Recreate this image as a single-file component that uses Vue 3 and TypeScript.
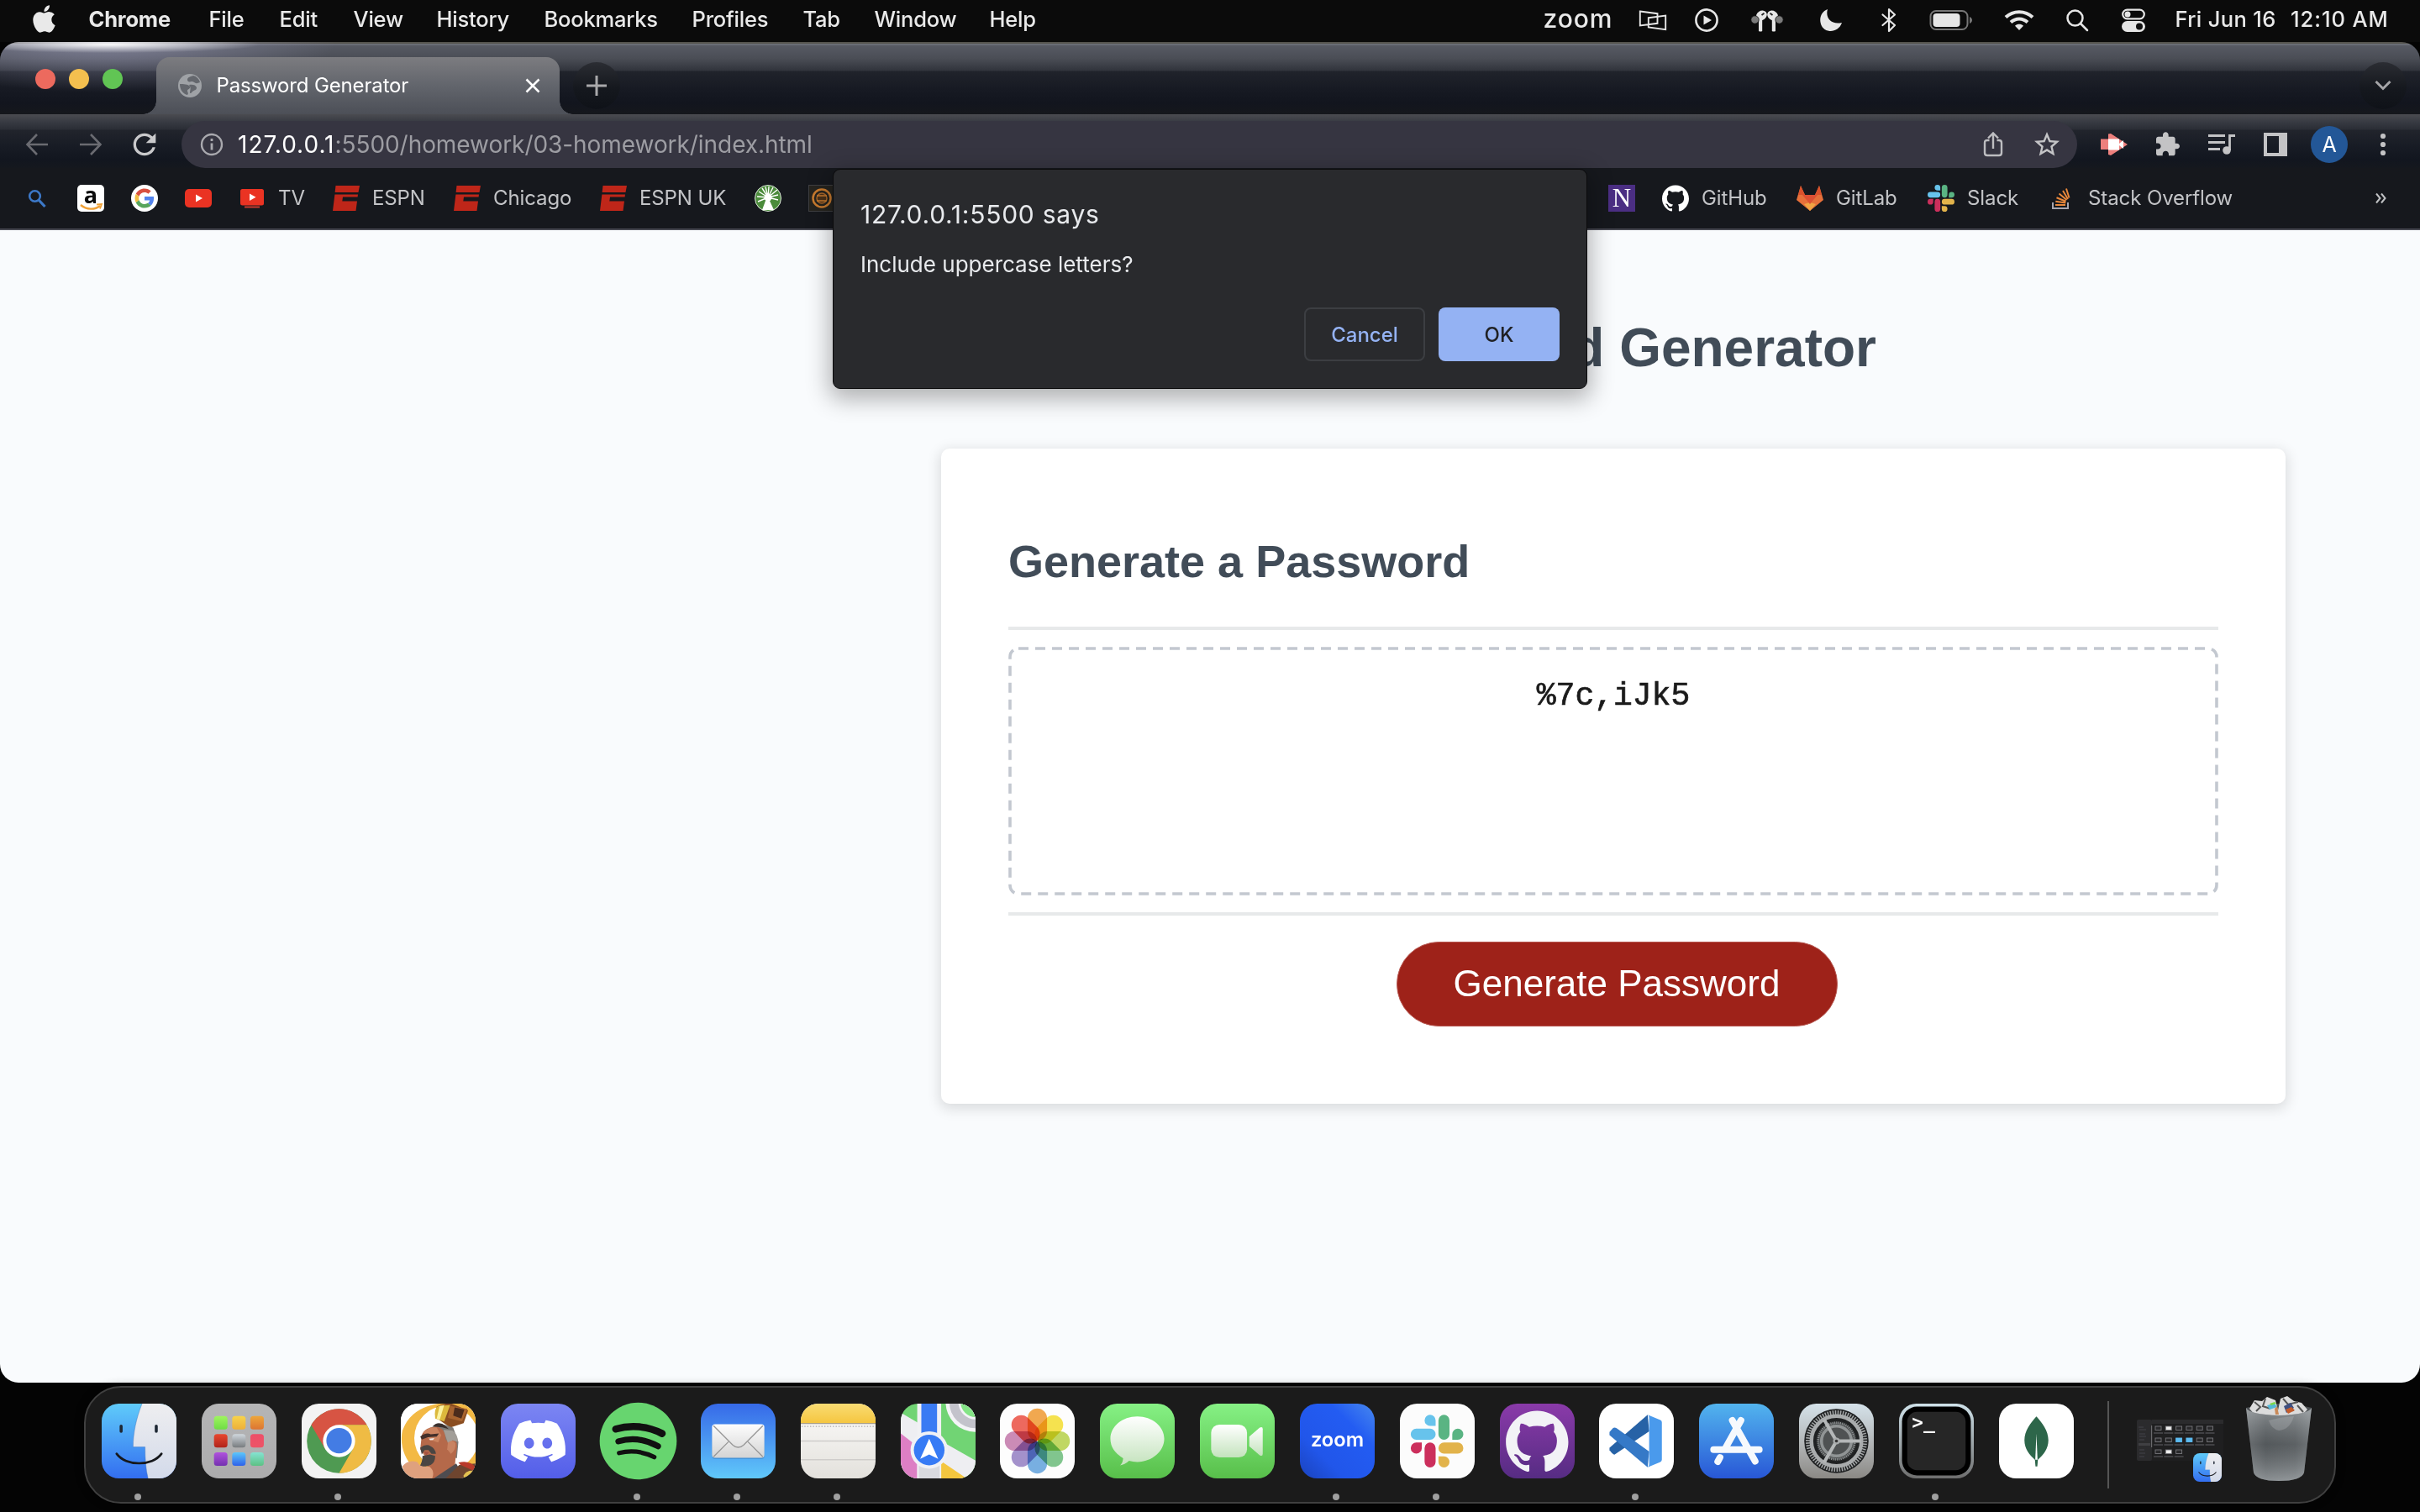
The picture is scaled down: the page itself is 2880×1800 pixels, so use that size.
<script setup lang="ts">
interface MenuItem {
  label: string
  width: number
  bold?: boolean
}

interface Bookmark {
  icon: string
  label?: string
  width?: number
}

const menuItems: MenuItem[] = [
  { label: 'Chrome', width: 101, bold: true },
  { label: 'File', width: 42 },
  { label: 'Edit', width: 46 },
  { label: 'View', width: 57 },
  { label: 'History', width: 86 },
  { label: 'Bookmarks', width: 134 },
  { label: 'Profiles', width: 90 },
  { label: 'Tab', width: 43 },
  { label: 'Window', width: 95 },
  { label: 'Help', width: 56 },
]

const leftBookmarks: Bookmark[] = [
  { icon: 'search' },
  { icon: 'amazon' },
  { icon: 'google' },
  { icon: 'youtube' },
  { icon: 'tv', label: 'TV', width: 32 },
  { icon: 'espn', label: 'ESPN', width: 64 },
  { icon: 'espn', label: 'Chicago', width: 94 },
  { icon: 'espn', label: 'ESPN UK', width: 104 },
  { icon: 'fidelity' },
  { icon: 'emblem' },
]

const rightBookmarks: Bookmark[] = [
  { icon: 'northwestern' },
  { icon: 'github', label: 'GitHub', width: 80 },
  { icon: 'gitlab', label: 'GitLab', width: 76 },
  { icon: 'slack', label: 'Slack', width: 64 },
  { icon: 'stack', label: 'Stack Overflow', width: 172 },
]

const password = '%7c,iJk5'

const githubPath =
  'M12 .297c-6.63 0-12 5.373-12 12 0 5.303 3.438 9.8 8.205 11.385.6.113.82-.258.82-.577 0-.285-.01-1.04-.015-2.04-3.338.724-4.042-1.61-4.042-1.61C4.422 18.07 3.633 17.7 3.633 17.7c-1.087-.744.084-.729.084-.729 1.205.084 1.838 1.236 1.838 1.236 1.07 1.835 2.809 1.305 3.495.998.108-.776.417-1.305.76-1.605-2.665-.3-5.466-1.332-5.466-5.93 0-1.31.465-2.38 1.235-3.22-.135-.303-.54-1.523.105-3.176 0 0 1.005-.322 3.3 1.23.96-.267 1.98-.399 3-.405 1.02.006 2.04.138 3 .405 2.28-1.552 3.285-1.23 3.285-1.23.645 1.653.24 2.873.12 3.176.765.84 1.23 1.91 1.23 3.22 0 4.61-2.805 5.625-5.475 5.92.42.36.81 1.096.81 2.22 0 1.606-.015 2.896-.015 3.286 0 .315.21.69.825.57C20.565 22.092 24 17.592 24 12.297c0-6.627-5.373-12-12-12'

const slackPaths = [
  { fill: '#cc2f5c', d: 'M5.042 15.165a2.528 2.528 0 0 1-2.52 2.523A2.528 2.528 0 0 1 0 15.165a2.527 2.527 0 0 1 2.522-2.52h2.52v2.52zM6.313 15.165a2.527 2.527 0 0 1 2.521-2.52 2.527 2.527 0 0 1 2.521 2.52v6.313A2.528 2.528 0 0 1 8.834 24a2.528 2.528 0 0 1-2.521-2.522v-6.313z' },
  { fill: '#67c3ec', d: 'M8.834 5.042a2.528 2.528 0 0 1-2.521-2.52A2.528 2.528 0 0 1 8.834 0a2.528 2.528 0 0 1 2.521 2.522v2.52H8.834zM8.834 6.313a2.528 2.528 0 0 1 2.521 2.521 2.528 2.528 0 0 1-2.521 2.521H2.522A2.528 2.528 0 0 1 0 8.834a2.528 2.528 0 0 1 2.522-2.521h6.312z' },
  { fill: '#5ab483', d: 'M18.956 8.834a2.528 2.528 0 0 1 2.522-2.521A2.528 2.528 0 0 1 24 8.834a2.528 2.528 0 0 1-2.522 2.521h-2.522V8.834zM17.688 8.834a2.528 2.528 0 0 1-2.523 2.521 2.527 2.527 0 0 1-2.52-2.521V2.522A2.527 2.527 0 0 1 15.165 0a2.528 2.528 0 0 1 2.523 2.522v6.312z' },
  { fill: '#e2b34b', d: 'M15.165 18.956a2.528 2.528 0 0 1 2.523 2.522A2.528 2.528 0 0 1 15.165 24a2.527 2.527 0 0 1-2.52-2.522v-2.522h2.52zM15.165 17.688a2.527 2.527 0 0 1-2.52-2.523 2.526 2.526 0 0 1 2.52-2.52h6.313A2.527 2.527 0 0 1 24 15.165a2.528 2.528 0 0 1-2.522 2.523h-6.313z' },
]

const launchpadTiles = [
  ['#9ff55f', '#6fdd45'],
  ['#f7d34c', '#eeb039'],
  ['#eda73b', '#dd7532'],
  ['#e8472f', '#b0241a'],
  ['#cfd6dc', '#777b7e'],
  ['#ee4e68', '#ec5467'],
  ['#b052dd', '#7431b0'],
  ['#5cc7fa', '#2f62ea'],
  ['#86e3d2', '#5cc184'],
]

const petals = ['#f2a03d', '#f6e13c', '#bcd553', '#74c183', '#6aa9e0', '#9a86c8', '#c87fb0', '#ee5a4d']
</script>

<template>
  <div class="desktop">
    <svg class="defs" width="0" height="0">
      <defs>
        <linearGradient id="finderBlue" x1="0" y1="0" x2="0" y2="1"><stop offset="0" stop-color="#5fcbfa" /><stop offset="1" stop-color="#336ef0" /></linearGradient>
        <linearGradient id="finderGray" x1="0" y1="0" x2="0" y2="1"><stop offset="0" stop-color="#eeeef0" /><stop offset="1" stop-color="#d3daea" /></linearGradient>
        <linearGradient id="launchBg" x1="0" y1="0" x2="0" y2="1"><stop offset="0" stop-color="#b5b5b6" /><stop offset="1" stop-color="#acacad" /></linearGradient>
        <linearGradient id="discordBg" x1="0" y1="0" x2="0" y2="1"><stop offset="0" stop-color="#7c86f3" /><stop offset="1" stop-color="#535ee9" /></linearGradient>
        <linearGradient id="mailBg" x1="0" y1="0" x2="0" y2="1"><stop offset="0" stop-color="#3669e8" /><stop offset="1" stop-color="#60c8fa" /></linearGradient>
        <linearGradient id="silver" x1="0" y1="0" x2="0" y2="1"><stop offset="0" stop-color="#fdfdfd" /><stop offset="1" stop-color="#d4d4d4" /></linearGradient>
        <linearGradient id="notesTop" x1="0" y1="0" x2="0" y2="1"><stop offset="0" stop-color="#f9dc73" /><stop offset="1" stop-color="#f5c640" /></linearGradient>
        <linearGradient id="notesPaper" x1="0" y1="0" x2="0" y2="1"><stop offset="0" stop-color="#fcfbfa" /><stop offset="1" stop-color="#e3e1dc" /></linearGradient>
        <linearGradient id="greenBg" x1="0" y1="0" x2="0" y2="1"><stop offset="0" stop-color="#86f185" /><stop offset="1" stop-color="#58bf4a" /></linearGradient>
        <linearGradient id="bubble" x1="0" y1="0" x2="0" y2="1"><stop offset="0" stop-color="#ffffff" /><stop offset="1" stop-color="#c4e3bd" /></linearGradient>
        <linearGradient id="zoomBg" x1="1" y1="0" x2="0" y2="1"><stop offset="0" stop-color="#4788ee" /><stop offset=".3" stop-color="#235cf2" /><stop offset=".7" stop-color="#2156ea" /><stop offset="1" stop-color="#1a43bd" /></linearGradient>
        <linearGradient id="githubBg" x1="0" y1="0" x2="0" y2="1"><stop offset="0" stop-color="#8a3aa9" /><stop offset="1" stop-color="#562c83" /></linearGradient>
        <linearGradient id="storeBg" x1="0" y1="0" x2="0" y2="1"><stop offset="0" stop-color="#52b4ee" /><stop offset="1" stop-color="#2857d6" /></linearGradient>
        <linearGradient id="steel" x1="0" y1="0" x2="0" y2="1"><stop offset="0" stop-color="#d5e2ea" /><stop offset=".55" stop-color="#b1b4b5" /><stop offset="1" stop-color="#8b8985" /></linearGradient>
        <linearGradient id="termRim" x1="0" y1="0" x2="0" y2="1"><stop offset="0" stop-color="#cfe2ea" /><stop offset="1" stop-color="#6e6e6e" /></linearGradient>
        <linearGradient id="can" x1="0" y1="0" x2="1" y2="0"><stop offset="0" stop-color="#85898c" /><stop offset=".3" stop-color="#606568" /><stop offset=".75" stop-color="#6d7275" /><stop offset="1" stop-color="#8e9396" /></linearGradient>
        <linearGradient id="canShade" x1="0" y1="0" x2="0" y2="1"><stop offset="0" stop-color="#b7bcbf" stop-opacity=".5" /><stop offset=".5" stop-color="#3d4144" stop-opacity=".35" /><stop offset="1" stop-color="#b1b6b9" stop-opacity=".55" /></linearGradient>
        <clipPath id="squircle"><rect width="100" height="100" rx="23" /></clipPath>
        <symbol id="finderFace" viewBox="0 0 100 100">
          <g clip-path="url(#squircle)">
            <rect width="100" height="100" fill="url(#finderBlue)" />
            <path d="M54 0C46 20 42 40 42 58h16c0 16 1 30 4 42h38V0z" fill="url(#finderGray)" />
            <path d="M54 0C46 20 42 40 42 58h16c0 16 1 30 4 42" fill="none" stroke="#3c6fb5" stroke-opacity=".45" stroke-width="1" />
            <rect x="24" y="28" width="4" height="11" rx="2" fill="#1d2733" />
            <rect x="71" y="28" width="4" height="11" rx="2" fill="#1d2733" />
            <path d="M20 67c12 17 48 17 60 0" fill="none" stroke="#16181c" stroke-width="3" stroke-linecap="round" />
          </g>
        </symbol>
      </defs>
    </svg>

    <header class="menubar">
      <svg class="apple" viewBox="2 0 20 24"><path fill="#e9e9e9" d="M12.152 6.896c-.948 0-2.415-1.078-3.96-1.04-2.04.027-3.91 1.183-4.961 3.014-2.117 3.675-.546 9.103 1.519 12.09 1.013 1.454 2.208 3.09 3.792 3.039 1.52-.065 2.09-.987 3.935-.987 1.831 0 2.35.987 3.96.948 1.637-.026 2.676-1.48 3.676-2.948 1.156-1.688 1.636-3.325 1.662-3.415-.039-.013-3.182-1.221-3.22-4.857-.026-3.04 2.48-4.494 2.597-4.559-1.429-2.09-3.623-2.324-4.39-2.376-2-.156-3.675 1.09-4.61 1.09zM15.53 3.83c.843-1.012 1.4-2.427 1.245-3.83-1.207.052-2.662.805-3.532 1.818-.78.896-1.454 2.338-1.273 3.714 1.338.104 2.715-.688 3.559-1.701" /></svg>
      <nav class="menus">
        <span v-for="item in menuItems" :key="item.label" class="menu" :class="{ bold: item.bold }" :style="{ width: item.width + 'px' }">{{ item.label }}</span>
      </nav>
      <div class="status">
        <span class="zoom-word">zoom</span>
        <svg class="s-share" width="34" height="28" viewBox="0 0 34 28" fill="none" stroke="#e6e6e6" stroke-width="1.900"><path d="M1.800 3.500l20.700 2.700v11.600L1.800 20.500zM11.800 11.200l20.400-2.700v16.700l-20.400-2.700z" /></svg>
        <svg class="s-play" width="30" height="30" viewBox="0 0 30 30"><circle cx="15" cy="15" r="12.600" fill="none" stroke="#e6e6e6" stroke-width="2.600" /><path d="M11.500 9.500l9.500 5.500-9.500 5.500z" fill="#e6e6e6" /></svg>
        <svg class="s-pods" width="40" height="28" viewBox="0 0 40 28">
          <g fill="#e6e6e6"><ellipse cx="13.300" cy="8.500" rx="6.800" ry="5.600" transform="rotate(-35 13.300 8.500)" /><ellipse cx="26.700" cy="8.500" rx="6.800" ry="5.600" transform="rotate(35 26.700 8.500)" /><rect x="10" y="12" width="4.200" height="15.500" rx="1.200" /><rect x="25.800" y="12" width="4.200" height="15.500" rx="1.200" /></g>
          <circle cx="5.500" cy="13.500" r="4.700" fill="#7b7b7b" stroke="#0b0b0b" stroke-width=".8" /><circle cx="34.500" cy="13.500" r="4.700" fill="#7b7b7b" stroke="#0b0b0b" stroke-width=".8" />
          <path d="M13.500 8l3-2.200M26.500 8l-3-2.200" stroke="#222" stroke-width="1.800" />
        </svg>
        <svg class="s-moon" width="30" height="30" viewBox="0 0 30 30"><path d="M11 2C8 12 15 21 28 18 24 30 9 31 4 22-0 14 3 5 11 2z" fill="#e6e6e6" /></svg>
        <svg class="s-bt" width="20" height="30" viewBox="0 0 20 30" fill="none" stroke="#e6e6e6" stroke-width="2.200" stroke-linejoin="round" stroke-linecap="round"><path d="M2.500 8.500L17 21 10 28V2l7 6.500L2.500 21" /></svg>
        <svg class="s-batt" width="52" height="26" viewBox="0 0 52 26"><rect x="1.500" y="2" width="44" height="22" rx="6.500" fill="none" stroke="#777" stroke-width="2" /><rect x="4.500" y="5" width="32" height="16" rx="4" fill="#e6e6e6" /><path d="M48 9c4 1.500 4 6.500 0 8z" fill="#777" /></svg>
        <svg class="s-wifi" width="36" height="28" viewBox="0 0 36 28" fill="none" stroke="#e6e6e6" stroke-width="4"><path d="M2 10.500c9-8.500 23-8.500 32 0M8 16.500c6-5.500 14-5.500 20 0" /><path d="M18 26l-5-5.200c3-2.600 7-2.600 10 0z" fill="#e6e6e6" stroke="none" /></svg>
        <svg class="s-search" width="28" height="28" viewBox="0 0 28 28" fill="none" stroke="#e6e6e6" stroke-width="2.500" stroke-linecap="round"><circle cx="11.500" cy="11.500" r="9" /><path d="M18 18l8 8" /></svg>
        <svg class="s-cc" width="30" height="28" viewBox="0 0 30 28"><rect x="2.200" y="1.700" width="25.600" height="10.600" rx="5.300" fill="none" stroke="#e6e6e6" stroke-width="2.200" /><circle cx="8" cy="7" r="3.500" fill="#e6e6e6" /><rect x="1" y="15" width="28" height="13" rx="6.500" fill="#e6e6e6" /><circle cx="22" cy="21.500" r="4" fill="#111" /></svg>
        <span class="date">Fri Jun 16</span>
        <span class="time">12:10 AM</span>
      </div>
    </header>

    <section class="window">
      <div class="tabstrip">
        <div class="lights"><i class="red"></i><i class="yellow"></i><i class="green"></i></div>
        <div class="tab">
          <svg class="favicon" width="28" height="28" viewBox="0 0 28 28"><circle cx="14" cy="14" r="14" fill="#9fa2a6" /><path d="M18 2c-3 1-7 2-7 5 0 2 2 3 5 2 3 0 4 3 7 2l3-1C25 6 22 3 18 2zM2 12c4 0 10 0 12 3 1 3-3 3-3 5s2 3 0 5C6 24 2 19 2 12zM13 13c4-1 8 0 9 3 0 4-3 3-5 5-1 1-1 2-3 2 0-4 2-6-1-10z" fill="#64676d" /></svg>
          <span class="tab-title">Password Generator</span>
          <svg class="close" width="18" height="18" viewBox="0 0 18 18" stroke="#fff" stroke-width="2.500"><path d="M1.500 1.500l15 15M16.500 1.500l-15 15" /></svg>
        </div>
        <div class="round-btn"><svg width="24" height="24" viewBox="0 0 24 24" stroke="#a9a9ab" stroke-width="3"><path d="M12 0v24M0 12h24" /></svg></div>
        <div class="round-btn last"><svg width="20" height="14" viewBox="0 0 20 14" fill="none" stroke="#a5a5a8" stroke-width="3"><path d="M1.500 2l8.500 8.500L18.500 2" /></svg></div>
      </div>

      <div class="toolbar">
        <svg class="nav-icon" width="28" height="28" viewBox="0 0 28 28" fill="none" stroke="#6a6b71" stroke-width="2.600"><path d="M27 14H3M14 2L2.500 14 14 26" /></svg>
        <svg class="nav-icon" width="28" height="28" viewBox="0 0 28 28" fill="none" stroke="#6a6b71" stroke-width="2.600"><path d="M1 14h24M14 2l11.500 12L14 26" /></svg>
        <svg class="nav-icon reload" width="40" height="40" viewBox="0 0 24 24"><path fill="#c9c9cb" d="M17.650 6.350C16.200 4.900 14.210 4 12 4c-4.420 0-7.990 3.580-7.990 8s3.570 8 7.990 8c3.730 0 6.840-2.550 7.730-6h-2.080c-.82 2.330-3.040 4-5.650 4-3.310 0-6-2.690-6-6s2.690-6 6-6c1.660 0 3.140.69 4.220 1.780L13 11h7V4l-2.350 2.350z" /></svg>
        <div class="omnibox">
          <svg class="info" width="28" height="28" viewBox="0 0 28 28"><circle cx="14" cy="14" r="12" fill="none" stroke="#a9a9ae" stroke-width="2.400" /><path d="M14 12.500v8M14 7v3" stroke="#a9a9ae" stroke-width="2.800" /></svg>
          <span class="url"><b>127.0.0.1</b>:5500/homework/03-homework/index.html</span>
          <svg class="share" width="24" height="32" viewBox="0 0 24 32" fill="none" stroke="#bdbdc0" stroke-width="2.400"><path d="M7.500 11H5q-3 0-3 3v12q0 3 3 3h14q3 0 3-3V14q0-3-3-3h-2.500M12 21V3.500M6 8.500l6-6 6 6" /></svg>
          <svg class="star" width="36" height="36" viewBox="0 0 24 24"><path fill="#c4c4c6" d="M22 9.240l-7.190-.62L12 2 9.190 8.630 2 9.240l5.460 4.730L5.820 21 12 17.270 18.180 21l-1.630-7.030L22 9.240zM12 15.400l-3.760 2.270 1-4.280-3.320-2.880 4.380-.38L12 6.100l1.710 4.040 4.380.38-3.320 2.880 1 4.280L12 15.400z" /></svg>
        </div>
        <div class="actions">
          <svg width="32" height="32" viewBox="0 0 32 32"><path d="M0 9.500h9V3.500L12 3l20 13-20 13-3-1v-6H0z" fill="#ee807d" /><rect x="9" y="9.500" width="13" height="13" fill="#fff" /><path d="M22 15l5-4v10l-5-4z" fill="#fff" /></svg>
          <svg width="32" height="32" viewBox="0.500 0 24 24"><path fill="#c3c3c5" d="M20.500 11H19V7c0-1.100-.9-2-2-2h-4V3.500C13 2.120 11.880 1 10.500 1S8 2.120 8 3.500V5H4c-1.100 0-1.990.9-1.990 2v3.800H3.500c1.490 0 2.700 1.210 2.700 2.700s-1.210 2.700-2.700 2.700H2V20c0 1.100.9 2 2 2h3.800v-1.500c0-1.490 1.210-2.700 2.700-2.700 1.490 0 2.700 1.210 2.700 2.700V22H17c1.100 0 2-.9 2-2v-4h1.500c1.380 0 2.500-1.120 2.500-2.500S21.880 11 20.500 11z" /></svg>
          <svg width="32" height="32" viewBox="0 0 32 32" fill="none" stroke="#c3c3c5" stroke-width="2.800"><path d="M0 5.500h20M0 13.500h20M0 21.500h14M25.500 23V5.500H32" /><circle cx="22" cy="23" r="4.800" fill="#c3c3c5" stroke="none" /></svg>
          <svg width="32" height="32" viewBox="0 0 32 32"><path fill="#c3c3c5" fill-rule="evenodd" d="M2 2h28v28H2zM6 6v20h14V6z" /></svg>
          <span class="avatar">A</span>
          <svg width="32" height="32" viewBox="0 0 32 32" fill="#c3c3c5"><circle cx="16" cy="6" r="3.100" /><circle cx="16" cy="16" r="3.100" /><circle cx="16" cy="26" r="3.100" /></svg>
        </div>
      </div>

      <div class="bookmarks">
        <template v-for="(group, g) in [leftBookmarks, rightBookmarks]" :key="g">
          <div class="bookmark-group">
            <div v-for="(mark, i) in group" :key="i" class="bookmark">
              <svg width="32" height="32" viewBox="0 0 32 32">
                <g v-if="mark.icon === 'search'" fill="none" stroke="#3c78c8" stroke-width="2.600"><circle cx="13.500" cy="13.500" r="6.300" /><path d="M18 18l7.500 8" stroke-width="3.200" /></g>
                <g v-else-if="mark.icon === 'amazon'">
                  <rect width="32" height="32" rx="5" fill="#fff" />
                  <text x="16" y="21.500" text-anchor="middle" font-family="Open Sans, sans-serif" font-weight="700" font-size="27" fill="#0d0d0d">a</text>
                  <path d="M4 24c7 6 17 6 23 1" fill="none" stroke="#f0a136" stroke-width="2.400" /><path d="M23 23.500l6-.5-2 5.500" fill="none" stroke="#f0a136" stroke-width="1.800" />
                </g>
                <g v-else-if="mark.icon === 'google'">
                  <circle cx="16" cy="16" r="16" fill="#fff" />
                  <g transform="translate(4.500 4.500) scale(.48)">
                    <path fill="#d95040" d="M24 9.500c3.540 0 6.710 1.220 9.210 3.600l6.850-6.850C35.900 2.380 30.470 0 24 0 14.620 0 6.510 5.380 2.560 13.220l7.980 6.190C12.430 13.720 17.740 9.500 24 9.500z" />
                    <path fill="#5383ec" d="M46.980 24.550c0-1.570-.15-3.090-.38-4.550H24v9.020h12.940c-.58 2.960-2.260 5.480-4.780 7.180l7.730 6c4.510-4.180 7.090-10.360 7.090-17.650z" />
                    <path fill="#f2bd42" d="M10.530 28.590c-.48-1.450-.76-2.990-.76-4.590s.27-3.140.76-4.590l-7.980-6.190C.92 16.460 0 20.120 0 24c0 3.880.92 7.540 2.560 10.780l7.970-6.190z" />
                    <path fill="#58a55c" d="M24 48c6.480 0 11.930-2.130 15.890-5.810l-7.730-6c-2.150 1.450-4.920 2.300-8.160 2.300-6.260 0-11.570-4.220-13.470-9.910l-7.980 6.190C6.510 42.620 14.620 48 24 48z" />
                  </g>
                </g>
                <g v-else-if="mark.icon === 'youtube'"><rect y="5" width="32" height="22" rx="5" fill="#ea3323" /><path d="M13 11.500l8 4.500-8 4.500z" fill="#fff" /></g>
                <g v-else-if="mark.icon === 'tv'"><rect x="2" y="5" width="28" height="19.500" rx="2.500" fill="#ea3323" /><path d="M13 10.500l7.500 4.200-7.500 4.200z" fill="#fff" /><rect x="7" y="25.500" width="18" height="2" fill="#c93a2f" /></g>
                <g v-else-if="mark.icon === 'espn'" fill="#bf2619"><path d="M3.500 1H32l-1.500 8H2.600zM2.400 11.500H30l-.4 3H12l-.7 5H29L27.500 31H0z" /></g>
                <g v-else-if="mark.icon === 'fidelity'">
                  <circle cx="16" cy="16" r="15.500" fill="#4b8b3b" stroke="#dfe9dc" stroke-width="1" />
                  <path d="M16 15L9 4M16 15L13 2.500M16 15l1-13M16 15l6-12M16 15l11-9M16 15l12-3M16 15L5 8M16 15L3 14M16 15l12 3M16 15L4 20" stroke="#fff" stroke-width="1.400" />
                  <circle cx="16" cy="15" r="4.500" fill="#fff" /><path d="M13 19h5l5 11H9z" fill="#fff" />
                </g>
                <g v-else-if="mark.icon === 'emblem'"><rect x=".5" y=".5" width="31" height="31" fill="#26241f" stroke="#3f3f42" /><circle cx="16" cy="16" r="10.500" fill="none" stroke="#c97b2f" stroke-width="2.500" /><circle cx="16" cy="16" r="6" fill="#4b3118" stroke="#a8662a" stroke-width="1.500" /><path d="M10 13h12M10 19h12" stroke="#c97b2f" stroke-width="1.500" /></g>
                <g v-else-if="mark.icon === 'northwestern'"><rect width="32" height="32" fill="#4b2e83" /><text x="16" y="26" text-anchor="middle" font-family="Liberation Serif, serif" font-size="31" fill="#fff">N</text></g>
                <path v-else-if="mark.icon === 'github'" transform="scale(1.333)" fill="#fff" :d="githubPath" />
                <g v-else-if="mark.icon === 'gitlab'"><path d="M0 18L5 1l5 11h12l5-11 5 17-16 13z" fill="#e6703a" /><path d="M5 1l5 11H2.200zM27 1l-5 11h7.800z" fill="#d9512c" /><path d="M9 23l7-2 7 2-7 8z" fill="#f0a443" /><path d="M7 12l9 11 9-11z" fill="#dc5033" /></g>
                <g v-else-if="mark.icon === 'slack'" transform="scale(1.333)"><path v-for="p in slackPaths" :key="p.fill" :fill="p.fill" :d="p.d" /></g>
                <g v-else fill="none" stroke="#e8873b" stroke-width="2.200"><path d="M8 24h12" /><path d="M8.300 19.800l12 1.700M9.500 15.200l11 4.500M12.500 10.500l9 7.500M17 7l6 10M21 4.500l3.500 11" stroke-width="2" /><path d="M5 21v7h18v-7" stroke="#a7a5ae" stroke-width="2" /></g>
              </svg>
              <span v-if="mark.label" class="mark-label" :style="{ width: mark.width + 'px' }">{{ mark.label }}</span>
            </div>
          </div>
        </template>
        <svg class="more" width="13" height="14" viewBox="0 0 13 14" fill="none" stroke="#bfc0c3" stroke-width="2"><path d="M1 1.500L5.500 7 1 12.500M7 1.500L11.500 7 7 12.500" /></svg>
      </div>

      <main class="page">
        <h1>Password Generator</h1>
        <div class="card">
          <h2>Generate a Password</h2>
          <div class="rule"></div>
          <div class="output">
            <svg class="dashes" width="1440" height="296" viewBox="0 0 1440 296"><rect x="2" y="2" width="1436" height="292" rx="10" fill="none" stroke="#c3c8d0" stroke-width="3.600" stroke-dasharray="12 8" /></svg>
            <span>{{ password }}</span>
          </div>
          <div class="rule"></div>
          <button class="generate">Generate Password</button>
        </div>
      </main>

      <div class="dialog">
        <div class="dialog-title">127.0.0.1:5500 says</div>
        <div class="dialog-text">Include uppercase letters?</div>
        <div class="dialog-actions">
          <button class="cancel">Cancel</button>
          <button class="ok">OK</button>
        </div>
      </div>
    </section>

    <footer class="dock">
      <div class="apps">
        <div class="app running"><svg viewBox="0 0 100 100"><use href="#finderFace" /></svg></div>
        <div class="app">
          <svg viewBox="0 0 100 100">
            <rect width="100" height="100" rx="23" fill="url(#launchBg)" />
            <g v-for="(tile, i) in launchpadTiles" :key="i">
              <linearGradient :id="'tile' + i" x1="0" y1="0" x2="0" y2="1"><stop offset="0" :stop-color="tile[0]" /><stop offset="1" :stop-color="tile[1]" /></linearGradient>
              <rect :x="16.500 + (i % 3) * 24.300" :y="16.500 + Math.floor(i / 3) * 24.300" width="18" height="18" rx="4" :fill="`url(#tile${i})`" />
            </g>
          </svg>
        </div>
        <div class="app running">
          <svg viewBox="0 0 100 100">
            <rect width="100" height="100" rx="23" fill="#f3f3f3" />
            <circle cx="50" cy="50" r="43" fill="#4f9a52" />
            <path d="M12.800 28.500A43 43 0 0 1 87.200 28.500H50L31.400 60.700z" fill="#d75443" />
            <path d="M87.200 28.500A43 43 0 0 1 50 93L68.600 60.700 50 28.500z" fill="#efbb44" />
            <circle cx="50" cy="50" r="21.500" fill="#fff" /><circle cx="50" cy="49.500" r="17" fill="#437ce4" />
          </svg>
        </div>
        <div class="app">
          <svg viewBox="0 0 100 100">
            <g clip-path="url(#squircle)">
              <rect width="100" height="100" fill="#fff" />
              <circle cx="56" cy="47" r="55" fill="#f3b944" /><circle cx="61" cy="46" r="43" fill="#fff" />
              <path d="M0 0h50Q14 6 3 34L0 40z" fill="#fff" />
              <path d="M46 18l2-14q8-5 20-4l22 9-6 17-18 6z" fill="#8a4d20" />
              <path d="M46 20q-2-14 4-17l16-1-8 22z" fill="#dcb93c" /><path d="M52 3l6-1-6 20-4-2z" fill="#fbf3a0" />
              <path d="M66 3l23 4-7 17-19-5z" fill="#a86430" /><path d="M72 5l13 3-4 12-11-4z" fill="#4c2c1c" />
              <path d="M44 32q3-5 14-4l12 4 7 19-2 22-14-4-6-20z" fill="#7d7a76" />
              <path d="M28 42q6-12 20-11 12 2 12 18l10 0q6 0 5 10l-2 16-2 25H40L32 70l-6-9z" fill="#b5694a" />
              <path d="M30 38q8-7 18-6l6 10-4 10-12-4z" fill="#cc8460" />
              <path d="M42 31q8-9 18-1l4 4q-10-4-22-3z" fill="#3b302d" />
              <path d="M26 44q8-6 14-3l11-1-3 4-12 1-8 3z" fill="#43302b" /><path d="M38 47l7-1-2 2.500-4 .5z" fill="#eee" />
              <path d="M57 35l12 1q8 6 7 15l-7-2-5 7z" fill="#a29e98" />
              <path d="M63 52q7-5 10 1 1 9-6 14l-5-6z" fill="#c98362" />
              <path d="M26 59q8-6 14-2 6 3 7 10l-6 0-4-5-5 0-4 6z" fill="#4a4542" />
              <path d="M29 70l10-2 7 2q0 9-6 12-7 3-15 2 4-6 4-14z" fill="#4a4542" />
              <path d="M31 64l7 1-4 4z" fill="#a45141" />
              <path d="M2 84q8-10 20-6 4 8 16 6 8 6 4 16H8z" fill="#dfa17e" />
              <path d="M44 100l30-20 12 20z" fill="#4e4c50" /><path d="M60 100l18-18 22-2v20z" fill="#6f452f" />
              <path d="M77 79q14-4 23 6v6L80 82z" fill="#b93a2a" /><path d="M84 96q4-8 16-6v10H84z" fill="#e4c250" />
            </g>
          </svg>
        </div>
        <div class="app">
          <svg viewBox="0 0 100 100">
            <rect width="100" height="100" rx="23" fill="url(#discordBg)" />
            <path transform="translate(13.500 13.500) scale(3.040)" fill="#fff" d="M20.317 4.370a19.791 19.791 0 00-4.885-1.515.074.074 0 00-.079.037c-.211.375-.445.865-.608 1.250-1.845-.276-3.680-.276-5.487 0-.164-.393-.406-.874-.618-1.250a.077.077 0 00-.079-.037 19.736 19.736 0 00-4.885 1.515.07.07 0 00-.032.028C.533 9.046-.319 13.580.099 18.058a.082.082 0 00.031.056c2.053 1.508 4.041 2.423 5.993 3.029a.078.078 0 00.084-.028c.462-.63.873-1.295 1.226-1.994a.076.076 0 00-.042-.106c-.653-.248-1.274-.55-1.872-.892a.077.077 0 01-.008-.128c.126-.094.252-.192.372-.291a.074.074 0 01.078-.011c3.928 1.793 8.180 1.793 12.061 0a.074.074 0 01.079.01c.12.099.246.198.373.292a.077.077 0 01-.007.128 12.299 12.299 0 01-1.873.891.077.077 0 00-.041.107c.36.698.772 1.363 1.225 1.993a.076.076 0 00.084.029c1.961-.607 3.950-1.522 6.002-3.029a.077.077 0 00.031-.055c.5-5.177-.838-9.674-3.549-13.660a.061.061 0 00-.031-.029zM8.020 15.331c-1.183 0-2.157-1.086-2.157-2.419 0-1.333.956-2.419 2.157-2.419 1.211 0 2.176 1.095 2.157 2.419 0 1.333-.956 2.419-2.157 2.419zm7.975 0c-1.183 0-2.157-1.086-2.157-2.419 0-1.333.955-2.419 2.157-2.419 1.211 0 2.176 1.095 2.157 2.419 0 1.333-.946 2.419-2.157 2.419z" />
          </svg>
        </div>
        <div class="app running">
          <svg viewBox="0 0 100 100" class="spotify">
            <circle cx="50" cy="50" r="51.500" fill="#67d56f" />
            <g fill="none" stroke="#111" stroke-linecap="round"><path d="M20 34c20-6 43-4 62 6" stroke-width="9.600" /><path d="M23.500 50.500c17-5 36-3 53 6.500" stroke-width="8" /><path d="M24.500 66c16-4 32-2 47 5.500" stroke-width="6" /></g>
          </svg>
        </div>
        <div class="app running">
          <svg viewBox="0 0 100 100">
            <rect width="100" height="100" rx="23" fill="url(#mailBg)" />
            <rect x="15" y="30" width="70" height="44" rx="4" fill="#1b4f94" opacity=".35" />
            <rect x="15" y="27.500" width="70" height="45" rx="4" fill="url(#silver)" />
            <path d="M17 71l20-20M83 71L63 51M17 29.500l26 26q7 6 14 0l26-26" fill="none" stroke="#979797" stroke-width="1.500" />
          </svg>
        </div>
        <div class="app running">
          <svg viewBox="0 0 100 100">
            <g clip-path="url(#squircle)">
              <rect width="100" height="100" fill="url(#notesPaper)" /><rect width="100" height="26" fill="url(#notesTop)" /><path d="M0 26.500h100" stroke="#aaa08a" stroke-width="1.500" />
              <path d="M1 30.500h98" stroke="#aaa" stroke-width="1.600" stroke-dasharray="1.600 2.200" /><path d="M0 50h100M0 75h100" stroke="#cfcdcb" stroke-width="1.600" />
            </g>
          </svg>
        </div>
        <div class="app">
          <svg viewBox="0 0 100 100">
            <g clip-path="url(#squircle)">
              <rect width="100" height="100" fill="#71d474" />
              <circle cx="100" cy="-2" r="40" fill="#f4f4f7" /><circle cx="100" cy="-2" r="35" fill="#c3c3cb" /><circle cx="100" cy="-2" r="23" fill="#f4f4f7" /><circle cx="100" cy="-2" r="20" fill="#84e486" />
              <path d="M0 12L22 25 54 50l46 26v24H0z" fill="#eeeef2" />
              <path d="M0 40l22 17v43H0z" fill="#dd7fc4" /><path d="M54 77l34 23H54z" fill="#f4c63f" />
              <rect x="22" width="32" height="100" fill="#f1f1f4" /><rect x="27.500" width="21" height="52" fill="#3a7bf3" /><path d="M24 70h28v30H24z" fill="#d9dadf" />
              <circle cx="38" cy="62" r="25" fill="#f0f1f5" /><circle cx="38" cy="62" r="20.500" fill="#377bf5" /><path d="M38 47l12 27-12-6-12 6z" fill="#fff" />
            </g>
          </svg>
        </div>
        <div class="app">
          <svg viewBox="0 0 100 100">
            <rect width="100" height="100" rx="23" fill="#fdfdfd" />
            <g class="petals"><rect v-for="(color, i) in petals" :key="color" x="37" y="6.500" width="26" height="43" rx="13" :fill="color" opacity=".9" :transform="`rotate(${i * 45} 50 50)`" /></g>
          </svg>
        </div>
        <div class="app">
          <svg viewBox="0 0 100 100">
            <rect width="100" height="100" rx="23" fill="url(#greenBg)" />
            <path d="M50 17c20 0 36 13.500 36 30S70 78 50 78q-6 0-11-1.500Q33 82 27 82.500q4-4 4-9.500Q14 63 14 47c0-16.500 16-30 36-30z" fill="url(#bubble)" />
          </svg>
        </div>
        <div class="app">
          <svg viewBox="0 0 100 100">
            <rect width="100" height="100" rx="23" fill="url(#greenBg)" />
            <rect x="15" y="28" width="48" height="44" rx="11" fill="url(#bubble)" /><path d="M66 44l14-12q4-2 4 2v33q0 4-4 2L66 57z" fill="url(#bubble)" />
          </svg>
        </div>
        <div class="app running">
          <svg viewBox="0 0 100 100">
            <rect width="100" height="100" rx="23" fill="url(#zoomBg)" />
            <text x="50" y="57.500" text-anchor="middle" textLength="71" lengthAdjust="spacingAndGlyphs" font-family="Inter, sans-serif" font-weight="600" font-size="27" fill="#fff">zoom</text>
          </svg>
        </div>
        <div class="app running">
          <svg viewBox="0 0 100 100">
            <rect width="100" height="100" rx="23" fill="#fcfcfc" />
            <g transform="translate(14.500 15) scale(2.930)"><path v-for="p in slackPaths" :key="p.fill" :fill="p.fill" :d="p.d" /></g>
          </svg>
        </div>
        <div class="app">
          <svg viewBox="0 0 100 100">
            <rect width="100" height="100" rx="23" fill="url(#githubBg)" />
            <path transform="translate(8 8.500) scale(3.480)" fill="#f2f2f6" :d="githubPath" />
          </svg>
        </div>
        <div class="app running">
          <svg viewBox="0 0 100 100">
            <rect width="100" height="100" rx="23" fill="#fff" />
            <path d="M65 15l2 22-46 31q-2 1-7-6v-3z" fill="#2762a6" />
            <path d="M14 38l4.500-5q2-2 5 0L67 64l-2 21L14 42z" fill="#3579c7" />
            <path d="M65 15l17 7q2 1 2 3v50q0 2-2 3l-17 7q2-1 2-4V19q0-3-2-4z" fill="#4a9aec" />
          </svg>
        </div>
        <div class="app">
          <svg viewBox="0 0 100 100">
            <rect width="100" height="100" rx="23" fill="url(#storeBg)" />
            <g stroke="#f6f9fd" stroke-width="9" stroke-linecap="round"><path d="M44.500 22.500L75 77M19.500 61.500h61M56 22.500L35 60M28 72l-3 5.500" /></g>
          </svg>
        </div>
        <div class="app">
          <svg viewBox="0 0 100 100" fill="none">
            <rect width="100" height="100" rx="23" fill="url(#steel)" />
            <circle cx="50" cy="50" r="43" fill="#202223" /><circle cx="50" cy="50" r="38" stroke="#a4a7a8" stroke-width="6" stroke-dasharray="1.700 1.700" />
            <circle cx="50" cy="50" r="33.500" stroke="#a9acad" stroke-width="5" />
            <circle cx="50" cy="50" r="26" fill="#4f5253" stroke="#2b2d2e" stroke-width="2" /><circle cx="50" cy="50" r="24.500" stroke="#8b8f90" stroke-width="3" stroke-dasharray="1.300 1.300" />
            <circle cx="50" cy="50" r="20" stroke="#909495" stroke-width="4" />
            <path d="M50 50h33M50 50L33.500 21.400M50 50L33.500 78.600" stroke="#b4b7b8" stroke-width="4.500" /><circle cx="50" cy="50" r="4.500" fill="#a9acad" /><circle cx="50" cy="50" r="2" fill="#333" />
          </svg>
        </div>
        <div class="app running">
          <svg viewBox="0 0 100 100">
            <rect width="100" height="100" rx="23" fill="url(#termRim)" /><rect x="4" y="4" width="92" height="92" rx="20" fill="#000" /><rect x="11" y="11" width="78" height="78" rx="13" fill="#262626" />
            <text x="17" y="34" font-family="DejaVu Sans Mono, monospace" font-weight="700" font-size="26" fill="#fff">&gt;_</text>
          </svg>
        </div>
        <div class="app">
          <svg viewBox="0 0 100 100">
            <rect width="100" height="100" rx="23" fill="#fff" />
            <path d="M50 17c8 9 16 19 16 32 0 12-7 20-14 26l-.8 9h-2.400L48 75c-7-6-14-14-14-26 0-13 8-23 16-32z" fill="#2d664a" /><path d="M50 40l1.500 35h-3z" fill="#fff" />
          </svg>
        </div>
      </div>
      <div class="divider"></div>
      <div class="minimized">
        <svg width="103" height="50" viewBox="0 0 103 50">
          <rect width="103" height="49" rx="2" fill="#1f1f20" /><rect width="18" height="49" rx="2" fill="#2b2b2d" /><rect x="18" width="85" height="5" fill="#2b2b2d" />
          <path d="M2 9h6M3 12h8M3 17h7M3 20h8M3 24h6M3 36h6M3 40h7M3 44h6" stroke="#45454a" stroke-width="1" /><rect x="2" y="28" width="14" height="3" fill="#404043" /><rect x="17" y="7" width="1.200" height="26" fill="#69696c" />
          <g v-for="i in 15" :key="i">
            <rect :x="22 + ((i - 1) % 6) * 12.300" :y="8 + Math.floor((i - 1) / 6) * 14" width="7" height="4.500" :fill="i === 9 || i === 10 ? '#5cbaf0' : i === 2 || i === 14 ? '#eee' : '#29292b'" :stroke="i === 9 || i === 10 ? '#5cbaf0' : '#77777b'" stroke-width=".9" />
            <path :d="`M${20 + ((i - 1) % 6) * 12.300} ${16 + Math.floor((i - 1) / 6) * 14}h11`" stroke="#4c4c4f" stroke-width="1.500" />
          </g>
        </svg>
        <svg class="badge" width="34" height="34" viewBox="0 0 100 100"><use href="#finderFace" /></svg>
      </div>
      <svg class="trash" width="80" height="104" viewBox="0 0 80 104">
        <path d="M1 15q39-10 78 0-1 10-39 10T1 15z" fill="#4a4e51" />
        <path d="M5 16L11 6l9 1 6-5 10 4 3 12 3-14 8-3 8 6 9 2 7 8-9 9q-28 4-52-1z" fill="#dcdcdc" />
        <path d="M11 8l7 6-5 5M24 4l-3 9 9 3M45 4l6 7 12-3M57 19l-3-9M62 12l7 8" fill="none" stroke="#555" stroke-width="2" />
        <path d="M26 12l9-2 3 4-9 3z" fill="#54b8d8" /><path d="M29 10l6-2 2 2-6 2z" fill="#7bd84a" /><path d="M46 13l8-4 4 6-9 6z" fill="#3e4f80" /><path d="M48 17l7-3 4 4-8 4z" fill="#c45c2b" /><path d="M35 16l3-3 2 10h-4z" fill="#c98a58" />
        <path d="M1 15q4 8 39 9 35-1 39-9l-9 77q-3 10-30 10T10 92z" fill="url(#can)" /><path d="M1 15q4 8 39 9 35-1 39-9l-9 77q-3 10-30 10T10 92z" fill="url(#canShade)" />
        <path d="M28 30q14-4 30-5-5 16-18 17-9-2-12-12z" fill="#b9bec0" opacity=".3" />
      </svg>
    </footer>
  </div>
</template>

<style>
body {
  margin: 0;
  background: #000;
}
</style>

<style scoped>
.desktop {
  width: 2880px;
  height: 1800px;
  display: flex;
  flex-direction: column;
  overflow: hidden;
  background: #040404;
  font-family: Inter, 'Liberation Sans', sans-serif;
  line-height: 1;
}

.defs {
  position: absolute;
}

svg {
  display: block;
  flex: none;
}

.menubar {
  height: 50px;
  flex: none;
  display: flex;
  align-items: center;
  justify-content: space-between;
  padding: 0 0 3px 39px;
  box-sizing: border-box;
  background: #0b0b0b;
  color: #e9e9e9;
  font-size: 25.500px;
  font-weight: 500;
}

.apple {
  width: 27px;
  height: 33px;
  margin-top: -3px;
}

.menus {
  display: flex;
  gap: 42px;
  margin: -1px 0 0 39.500px;
  flex: 1;
}

.menu {
  white-space: nowrap;
  letter-spacing: -0.2px;
}

.menu.bold {
  font-weight: 700;
}

.status {
  display: flex;
  align-items: center;
  white-space: nowrap;
}

.zoom-word {
  width: 82px;
  font-size: 30px;
  font-weight: 500;
  line-height: 30px;
  margin-top: -4px;
  letter-spacing: 0.9px;
}

.s-share { margin-left: 31.500px; }
.s-play { margin-left: 32px; }
.s-pods { margin-left: 36.500px; }
.s-moon { margin-left: 41.500px; }
.s-bt { margin-left: 44px; }
.s-batt { margin-left: 38px; }
.s-wifi { margin-left: 36.500px; }
.s-search { margin-left: 37.500px; }
.s-cc { margin-left: 37.500px; }

.date {
  width: 121px;
  margin: -1px 0 0 35px;
  letter-spacing: 0.35px;
}

.time {
  width: 154px;
  margin: -1px 0 0 16.400px;
  letter-spacing: 0.95px;
}

.window {
  position: relative;
  height: 1596px;
  flex: none;
  display: flex;
  flex-direction: column;
  border-radius: 22px;
  overflow: hidden;
  background: #16181d;
}

.tabstrip {
  height: 86px;
  flex: none;
  display: flex;
  box-sizing: border-box;
  padding: 18px 16px 0 42px;
  background:
    radial-gradient(ellipse 180px 10px at 130px 3px, rgba(255, 255, 255, 0.95), rgba(255, 255, 255, 0) 100%),
    radial-gradient(ellipse 270px 60px at 130px 0, rgba(170, 170, 205, 0.5), rgba(170, 170, 205, 0) 100%),
    linear-gradient(#55544f 0 2px, #696c75 2px 4px, #575a64 4px, #4a4d55 20px, #31343c 34px, #20232b 35px, #171a23 56px, #12151e 72px, #15171c 86px);
}

.lights {
  display: flex;
  gap: 16px;
  padding-top: 14px;
}

.lights i {
  width: 24px;
  height: 24px;
  border-radius: 50%;
}

.red { background: #ec6a5e; }
.yellow { background: #f4bf4f; }
.green { background: #61c554; }

.tab {
  position: relative;
  width: 480px;
  height: 68px;
  margin-left: 40px;
  box-sizing: border-box;
  padding: 0 23px 0 26px;
  display: flex;
  align-items: center;
  border-radius: 16px 16px 0 0;
  background: linear-gradient(#7c7c80, #62656c 50%, #4c4f57);
}

.tab::before,
.tab::after {
  content: '';
  position: absolute;
  bottom: 0;
  width: 16px;
  height: 16px;
}

.tab::before {
  left: -16px;
  background: radial-gradient(circle at 0 0, transparent 15.500px, #4e5159 16px);
}

.tab::after {
  right: -16px;
  background: radial-gradient(circle at 100% 0, transparent 15.500px, #4e5159 16px);
}

.tab-title {
  flex: 1;
  margin-left: 17.500px;
  color: #fff;
  font-size: 24px;
  letter-spacing: -0.15px;
}

.round-btn {
  width: 56px;
  height: 56px;
  margin: 6px 0 0 16px;
  display: flex;
  align-items: center;
  justify-content: center;
  border-radius: 50%;
  background: linear-gradient(#2b2d33, #15181e 55%, #0f1218);
}

.round-btn.last {
  margin-left: auto;
}

.toolbar {
  height: 64px;
  flex: none;
  display: flex;
  align-items: center;
  padding: 8px 28px 0 30px;
  box-sizing: border-box;
  background: linear-gradient(#4a4b50, #363941 10px, #2a2d35 18px, #21242c 19px, #171b24 40px, #12161f 54px, #15181e 64px);
}

.nav-icon {
  margin-right: 36px;
}

.nav-icon.reload {
  margin: 0 24px 0 -6px;
}

.omnibox {
  width: 2256px;
  height: 56px;
  box-sizing: border-box;
  display: flex;
  align-items: center;
  padding: 0 18px 0 22px;
  border-radius: 28px;
  background: #363541;
}

.url {
  flex: 1;
  margin-left: 17px;
  color: #9d9da3;
  font-size: 28px;
  letter-spacing: -0.06px;
}

.url b {
  font-weight: 400;
  letter-spacing: 1px;
  color: #fff;
}

.share {
  margin-right: 34px;
}

.actions {
  flex: 1;
  display: flex;
  align-items: center;
  justify-content: space-between;
  margin-left: 28px;
}

.avatar {
  width: 44px;
  height: 44px;
  margin: 0 -6px;
  border-radius: 50%;
  background: #235797;
  color: #fff;
  font-size: 25px;
  line-height: 44px;
  text-align: center;
}

.bookmarks {
  height: 74px;
  flex: none;
  display: flex;
  align-items: center;
  justify-content: space-between;
  box-sizing: border-box;
  padding: 0 40px 0 28px;
  border-bottom: 2px solid #494a53;
  background: #16181d;
  color: #c3c4c7;
  font-size: 24px;
}

.bookmark-group {
  display: flex;
  gap: 32px;
}

.bookmark-group + .bookmark-group {
  margin: 0 169px 0 auto;
}

.bookmark {
  display: flex;
  align-items: center;
}

.mark-label {
  margin: -1px 0 0 15px;
  padding-right: 1px;
  white-space: nowrap;
  letter-spacing: -0.1px;
}

.page {
  flex: 1;
  box-sizing: border-box;
  padding: 94px 160px 0 1120px;
  background: #f9fbfd;
  font-family: 'Liberation Sans', Arial, sans-serif;
}

h1 {
  margin: 0;
  height: 166px;
  color: #414c58;
  font-size: 64px;
  line-height: 92px;
  text-align: center;
}

.card {
  height: 780px;
  box-sizing: border-box;
  padding: 80px;
  display: flex;
  flex-direction: column;
  border-radius: 10px;
  background: #fff;
  box-shadow: 0 4px 16px 2px rgba(0, 0, 0, 0.13);
}

h2 {
  margin: 0;
  height: 132px;
  color: #414c58;
  font-size: 54px;
  line-height: 109px;
}

.rule {
  height: 4px;
  flex: none;
  background: #e7e9ea;
}

.output {
  position: relative;
  height: 296px;
  margin: 20px 0;
  box-sizing: border-box;
  padding-top: 37px;
  color: #1b1b1b;
  font-family: 'Liberation Mono', 'Courier New', monospace;
  font-size: 38px;
  line-height: 44px;
  text-align: center;
  -webkit-text-stroke: 0.7px #1b1b1b;
}

.dashes {
  position: absolute;
  left: 0;
  top: 0;
}

.generate {
  align-self: center;
  width: 525px;
  height: 101px;
  margin: 31px 0 0 8px;
  padding: 0 0 2px;
  border: 1px solid #b75750;
  border-radius: 51px;
  background: #9e2219;
  color: #fff;
  font-family: inherit;
  font-size: 44px;
}

.dialog {
  position: absolute;
  left: 991px;
  top: 151px;
  width: 898px;
  height: 262px;
  box-sizing: border-box;
  padding: 38px 33px 0 32px;
  border-radius: 9px;
  border: 1px solid #0b0b0c;
  background: #292a2d;
  box-shadow: 0 8px 28px 4px rgba(0, 0, 0, 0.3);
  color: #e8eaed;
}

.dialog-title {
  font-size: 30px;
  line-height: 30px;
  letter-spacing: 0.75px;
}

.dialog-text {
  margin-top: 32px;
  font-size: 26px;
  line-height: 26px;
}

.dialog-actions {
  display: flex;
  justify-content: flex-end;
  gap: 16px;
  margin: 38px -1px 0 0;
}

.dialog-actions button {
  width: 144px;
  height: 64px;
  padding: 0;
  border-radius: 8px;
  font: 500 24px Inter, sans-serif;
}

.cancel {
  border: 2px solid #3c3e42;
  background: transparent;
  color: #94b2f3;
}

.ok {
  border: 0;
  background: #94b2f3;
  color: #202124;
}

.dock {
  position: relative;
  width: 2680px;
  height: 140px;
  flex: none;
  margin: 4px 0 0 100px;
  display: flex;
  box-sizing: border-box;
  padding: 0 26px 0 19px;
  border: 2px solid #404040;
  border-radius: 44px;
  background: #1b1b1b;
  box-shadow: 0 0 12px rgba(0, 0, 0, 0.3);
}

.apps {
  width: 2347px;
  display: flex;
  justify-content: space-between;
}

.app {
  position: relative;
  width: 89px;
  padding-top: 18.500px;
}

.app svg {
  width: 89px;
  height: 89px;
  overflow: visible;
}

.app.running::after {
  content: '';
  position: absolute;
  left: 39px;
  bottom: 2px;
  width: 8px;
  height: 8px;
  border-radius: 50%;
  background: #a0a0a0;
}

.petals rect {
  mix-blend-mode: multiply;
}

.divider {
  width: 2px;
  height: 104px;
  margin: 16px 0 0 40px;
  background: #555;
}

.minimized {
  position: relative;
  margin: 38px 0 0 33px;
}

.badge {
  position: absolute;
  left: 67px;
  top: 40px;
}

.trash {
  margin: 9px 0 0 26px;
}
</style>
